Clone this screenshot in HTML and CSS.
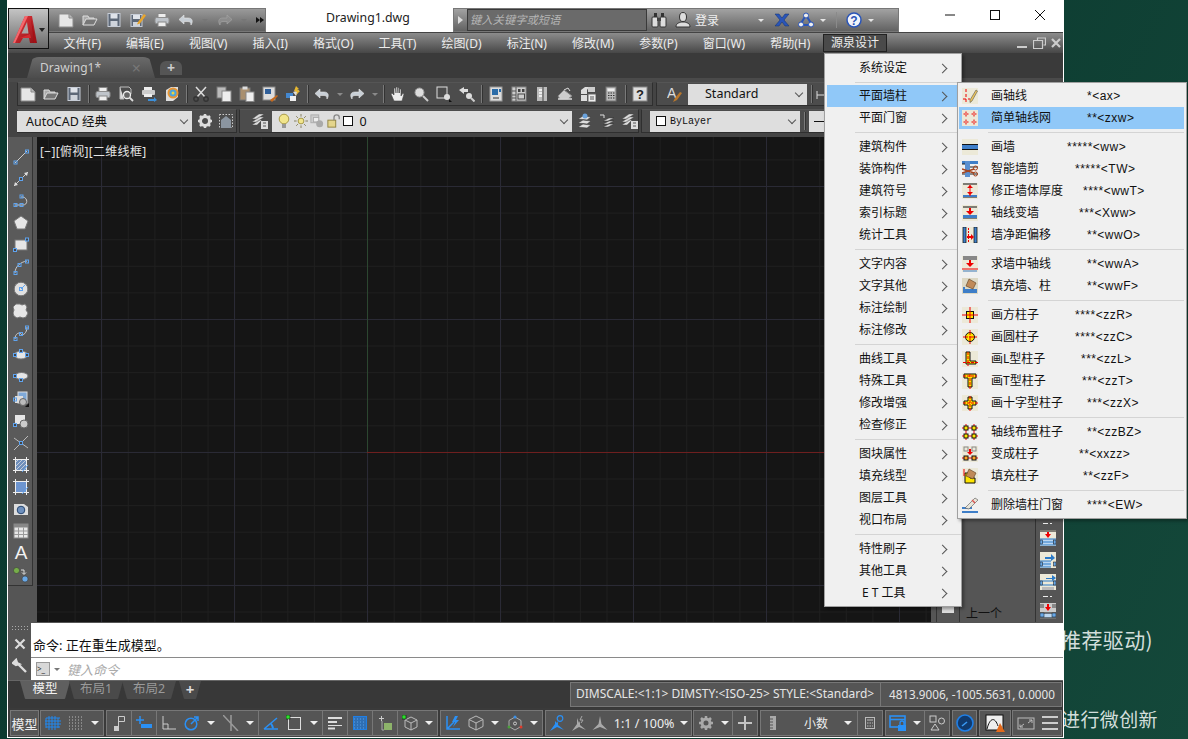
FILE: index.html
```html
<!DOCTYPE html>
<html>
<head>
    <title>Drawing1.dwg</title>
    <link rel="stylesheet" href="styles.css">
</head>
<body>
<svg class="defs" width="0" height="0">
    <defs>
        <linearGradient id="red" x1="0" y1="0" x2="1" y2="1"><stop offset="0" stop-color="#ee3a40"/><stop offset="1" stop-color="#8c1116"/></linearGradient>
        <symbol id="new" viewBox="0 0 16 16"><path d="M1 2h10l4 4v9H1z" fill="#e6e6e6" stroke="#8b8b8b"/><path d="M11 2v4h4" fill="#bbb" stroke="#8b8b8b"/></symbol>
        <symbol id="open" viewBox="0 0 16 16"><path d="M1 13V4h5l1 2h5v2" fill="#aaa" stroke="#ddd"/><path d="M1 13l3-6h11l-3 6z" fill="#777" stroke="#ddd"/></symbol>
        <symbol id="save" viewBox="0 0 16 16"><rect x="2" y="1.500" width="12" height="13" fill="#5d6878" stroke="#c6ccd6"/><rect x="4.500" y="2" width="7" height="4.500" fill="#dfe3ea"/><rect x="4.500" y="9" width="7" height="5" fill="#cfd4dc"/></symbol>
        <symbol id="saveas" viewBox="0 0 16 16"><rect x="1" y="2.500" width="11" height="12" fill="#5d6878" stroke="#c6ccd6"/><rect x="3" y="3" width="7" height="4" fill="#dfe3ea"/><rect x="3" y="10" width="7" height="4" fill="#cfd4dc"/><path d="M8 10l6-8 2 1.500-6 8-3 1z" fill="#eaa62c"/></symbol>
        <symbol id="print" viewBox="0 0 16 16"><rect x="4" y="1.500" width="8" height="4" fill="#eee" stroke="#888"/><rect x="1" y="5.500" width="14" height="6" rx="1.500" fill="#bfc4ca" stroke="#8e8e8e"/><rect x="4" y="10" width="8" height="4.500" fill="#eee" stroke="#888"/></symbol>
        <symbol id="undo" viewBox="0 0 16 16"><path d="M6 3L1 7.500 6 12V9.500h4c2 0 3 1 3 3.500 2-3 2-7-3-7H6z" fill="#c8cfd6" stroke="#e8e8e8" stroke-width=".6"/></symbol>
        <symbol id="redo" viewBox="0 0 16 16"><path d="M10 3l5 4.500L10 12V9.500H6c-2 0-3 1-3 3.500-2-3-2-7 3-7h4z" fill="#c8cfd6" stroke="#e8e8e8" stroke-width=".6"/></symbol>
        <symbol id="undod" viewBox="0 0 16 16"><path d="M10 3l5 4.500L10 12V9.500H6c-2 0-3 1-3 3.500-2-3-2-7 3-7h4z" fill="#8c8c8c" stroke="#a8a8a8" stroke-width=".6"/></symbol>
        <symbol id="preview" viewBox="0 0 16 16"><path d="M2 1h9l2 2v5" fill="none" stroke="#bbb"/><path d="M2 1v12h4" fill="#ddd" stroke="#bbb"/><circle cx="9" cy="9" r="3.500" fill="#666" stroke="#eee" stroke-width="1.300"/><path d="M11.500 11.500l3.500 3.500" stroke="#ddd" stroke-width="1.800"/></symbol>
        <symbol id="plot" viewBox="0 0 16 16"><rect x="3" y="1" width="8" height="3" fill="#eee"/><rect x="1" y="4" width="13" height="5" rx="1" fill="#ccc"/><rect x="3" y="8" width="8" height="3" fill="#eee"/><path d="M7 13h6v-2l3 3-3 2v-1H7z" fill="#3d8fd8"/></symbol>
        <symbol id="publish" viewBox="0 0 16 16"><path d="M2 4l5-3h7v10l-5 4H2z" fill="#ddd"/><circle cx="9" cy="7" r="5.500" fill="#e89532"/><circle cx="9" cy="7" r="3.500" fill="#4ba3dd"/><circle cx="9" cy="7" r="1.500" fill="#e8d542"/></symbol>
        <symbol id="cut" viewBox="0 0 16 16"><path d="M3 1l9 10M13 1L4 11" stroke="#ddd" stroke-width="1.500"/><circle cx="3" cy="13" r="2.200" fill="none" stroke="#333" stroke-width="1.400"/><circle cx="13" cy="13" r="2.200" fill="none" stroke="#333" stroke-width="1.400"/></symbol>
        <symbol id="copy" viewBox="0 0 16 16"><rect x="1" y="1" width="9" height="11" fill="#bbb" stroke="#777"/><rect x="6" y="5" width="9" height="10.500" fill="#eee" stroke="#888"/></symbol>
        <symbol id="paste" viewBox="0 0 16 16"><rect x="1" y="2" width="10" height="12" fill="#a98f6e" stroke="#777"/><rect x="3.500" y="0.500" width="5" height="3" fill="#ddd"/><rect x="7" y="6" width="8" height="9.500" fill="#eee" stroke="#888"/></symbol>
        <symbol id="match" viewBox="0 0 16 16"><rect x="1" y="1" width="12" height="13" fill="#ddd" stroke="#888"/><rect x="3" y="3" width="6" height="5" fill="#2f5f9a"/><path d="M8 14l7-5 1 1-6 6z" fill="#c66a1e"/></symbol>
        <symbol id="brush" viewBox="0 0 16 16"><rect x="1" y="7" width="7" height="5" fill="#4488d0"/><rect x="5" y="10" width="6" height="5" fill="#eee"/><path d="M8 6l6-2-3 6" fill="#ddd"/><path d="M11 0l3 3-2 1 3 1-4 4 1-3-3-1z" fill="#e8b830"/></symbol>
        <symbol id="hand" viewBox="0 0 16 16"><path d="M4 15L1 8l1-1 2 2V2h1.500l.5 5V1h1.500l.5 6V1.500H9l.5 5.500V3h1.500v7l2-3 1 1-2 7z" fill="#eee" stroke="#444" stroke-width=".6"/></symbol>
        <symbol id="zoom" viewBox="0 0 16 16"><circle cx="6.500" cy="6.500" r="4.500" fill="#ddd" stroke="#999"/><path d="M10 10l5 5" stroke="#ccc" stroke-width="2"/></symbol>
        <symbol id="zoomw" viewBox="0 0 16 16"><rect x="1" y="1" width="10" height="11" fill="none" stroke="#ddd"/><circle cx="11" cy="11" r="3" fill="#ddd"/><path d="M13 13l3 3h-3z" fill="#111"/></symbol>
        <symbol id="zoomp" viewBox="0 0 16 16"><path d="M0 4l5-3v2h4v3H5v2z" fill="#ddd"/><circle cx="10" cy="10" r="3" fill="#ddd"/><path d="M12 12l3.500 3.500" stroke="#ccc" stroke-width="2"/></symbol>
        <symbol id="props" viewBox="0 0 16 16"><rect x="2" y="1" width="12" height="14" fill="#ddd" stroke="#999"/><rect x="4" y="3" width="6" height="6" fill="#2b6ca8"/><rect x="11" y="3" width="2" height="3" fill="#2b6ca8"/><path d="M5 12h6" stroke="#333"/></symbol>
        <symbol id="dcenter" viewBox="0 0 16 16"><rect x="1" y="1" width="14" height="14" fill="#ccc" stroke="#888"/><path d="M5 1v14M1 5h4M1 9h4M1 12h4" stroke="#555"/><rect x="7" y="3" width="2.500" height="3" fill="#444"/><rect x="11" y="3" width="2.500" height="3" fill="#444"/><rect x="7" y="8" width="6.500" height="5" fill="none" stroke="#444"/></symbol>
        <symbol id="palette" viewBox="0 0 16 16"><rect x="3" y="1" width="10" height="14" fill="#bbb"/><path d="M9 1v14" stroke="#444"/><path d="M5 4h3M5 7h3M5 10h3" stroke="#eee" stroke-width="2"/></symbol>
        <symbol id="sheet" viewBox="0 0 16 16"><path d="M1 10l6-6 8 6-4 3H3z" fill="#ccc" stroke="#888"/><path d="M1 13h14" stroke="#ddd" stroke-width="1.500"/><path d="M7 4l4-2 2 3" stroke="#ddd" fill="none"/></symbol>
        <symbol id="markup" viewBox="0 0 16 16"><path d="M1 4l4-3h4l-2 3v4H1z" fill="#ddd"/><rect x="8" y="1" width="7" height="5" fill="#ccc"/><rect x="1" y="9" width="6" height="6" fill="#ddd"/><rect x="8" y="8" width="8" height="8" fill="#eee" stroke="#666"/><path d="M10 11h4M10 13h4" stroke="#555"/></symbol>
        <symbol id="calc" viewBox="0 0 16 16"><rect x="3" y="1" width="10" height="14" fill="#bbb" stroke="#777"/><rect x="4.500" y="2.500" width="7" height="2.500" fill="#eee"/><path d="M5 7h1.500M7.500 7H9M10 7h1.500M5 9.500h1.500M7.500 9.500H9M10 9.500h1.500M5 12h1.500M7.500 12H9M10 12h1.500" stroke="#333" stroke-width="1.200"/></symbol>
        <symbol id="hlp" viewBox="0 0 16 16"><rect x="1" y="1" width="14" height="14" fill="#ddd" stroke="#888"/><text x="8" y="13" text-anchor="middle" font-size="13" font-weight="700" font-family="Liberation Sans" fill="#222">?</text></symbol>
        <symbol id="txbrush" viewBox="0 0 16 16"><text x="0" y="12" font-size="14" font-family="Liberation Sans" fill="#ddd">A</text><path d="M6 16l2-4 5-6 2 1-5 7z" fill="#b9772c"/></symbol>
        <symbol id="dimic" viewBox="0 0 16 16"><path d="M1 5v8M1 9h14" stroke="#ddd"/><path d="M8 6l5-5 1 1-5 6z" fill="#b9772c"/></symbol>
        <symbol id="gear" viewBox="0 0 16 16"><circle cx="8" cy="8" r="4.500" fill="none" stroke="#ddd" stroke-width="3"/><path d="M8 1v3M8 12v3M1 8h3M12 8h3M3 3l2 2M11 11l2 2M13 3l-2 2M3 13l2-2" stroke="#ddd" stroke-width="2.500"/></symbol>
        <symbol id="wsgrid" viewBox="0 0 16 16"><rect x="1.500" y="1.500" width="13" height="13" fill="none" stroke="#ccc" stroke-dasharray="1.500 1.500"/><path d="M3 15V7l5-4 5 4v8z" fill="#8b95a0"/></symbol>
        <symbol id="layers" viewBox="0 0 16 16"><path d="M0 6l7-5h5L5 6zM0 9l7-5h5L5 9zM0 12l7-5h3L5 12z" fill="#ddd" stroke="#444" stroke-width=".4"/><rect x="9" y="8" width="7" height="8" fill="#ddd"/><path d="M11 10h3M11 13h3" stroke="#555"/></symbol>
        <symbol id="layers2" viewBox="0 0 16 16"><path d="M2 6l5-3 8 1-4 3zM2 10l5-3 8 1-4 3zM2 14l5-3 8 1-4 3z" fill="#ddd" stroke="#333" stroke-width=".5"/><circle cx="9" cy="3" r="2.500" fill="#6aa2dc"/></symbol>
        <symbol id="layers3" viewBox="0 0 16 16"><path d="M1 2h4v3" stroke="#ddd" fill="none"/><path d="M4 8l6-3h5l-6 3zM4 11l6-3h5l-6 3zM4 14l6-3h5l-6 3z" fill="#ddd" stroke="#333" stroke-width=".5"/></symbol>
        <symbol id="bulb" viewBox="0 0 14 16"><circle cx="7" cy="6" r="4.800" fill="#f1e58c" stroke="#a99b4a"/><rect x="5" y="11" width="4" height="4" fill="#999"/></symbol>
        <symbol id="sun" viewBox="0 0 16 16"><circle cx="8" cy="8" r="3.300" fill="#f1e58c" stroke="#9d8f3e"/><path d="M8 0v3M8 13v3M0 8h3M13 8h3M2.500 2.500l2 2M11.500 11.500l2 2M13.500 2.500l-2 2M2.500 13.500l2-2" stroke="#7d7650"/></symbol>
        <symbol id="frz" viewBox="0 0 16 16"><rect x="1" y="1" width="9" height="9" fill="#ccc" stroke="#aaa"/><rect x="4" y="4" width="6" height="5" fill="#eee" stroke="#aaa"/><circle cx="11" cy="11" r="4" fill="#aaa"/></symbol>
        <symbol id="lock" viewBox="0 0 16 16"><rect x="1" y="7" width="9" height="8" fill="#e4d58c" stroke="#8a7c3a"/><path d="M8 7V4a3 3 0 0 1 6 0v2" fill="none" stroke="#888" stroke-width="1.500"/></symbol>
        <symbol id="logo" viewBox="0 0 24 27"><path d="M12 0h7l5 27h-7l-1-5h-6l-3 5H0z" fill="url(#red)"/><path d="M14 6L8.500 17.500H15.500z" fill="#a7a7a7"/><path d="M12 0h3L2 27H0z" fill="#f4686d"/><path d="M18 2l5 25h-2z" fill="#a80f15"/><path d="M7 22l10-4 1 4z" fill="#d42a30"/></symbol>
        <symbol id="binoc" viewBox="0 0 16 16"><rect x="1" y="5" width="6" height="10" rx="1" fill="#ddd" stroke="#333"/><rect x="9" y="5" width="6" height="10" rx="1" fill="#ddd" stroke="#333"/><rect x="3" y="1" width="3" height="4" fill="#333"/><rect x="10" y="1" width="3" height="4" fill="#333"/><rect x="6" y="6" width="4" height="3" fill="#444"/></symbol>
        <symbol id="user" viewBox="0 0 16 16"><ellipse cx="8" cy="5" rx="3.500" ry="4.500" fill="#ddd" stroke="#333"/><path d="M1 15c0-4 3-4 5-5h4c2 1 5 1 5 5z" fill="#ddd" stroke="#333"/></symbol>
        <symbol id="xch" viewBox="0 0 16 16"><path d="M1 2h4l3 4 3-4h4L10 8l5 6h-4L8 10l-3 4H1l5-6z" fill="#2a55b8" stroke="#13306f" stroke-width=".5"/></symbol>
        <symbol id="tri" viewBox="0 0 16 16"><path d="M8 3L2 13h12z" fill="none" stroke="#2a55b8" stroke-width="2"/><circle cx="8" cy="3.500" r="2.500" fill="#eee" stroke="#2a55b8"/><circle cx="3" cy="12.500" r="2.500" fill="#eee" stroke="#2a55b8"/><circle cx="13" cy="12.500" r="2.500" fill="#eee" stroke="#2a55b8"/></symbol>
        <symbol id="qhelp" viewBox="0 0 16 16"><circle cx="8" cy="8" r="7" fill="#f2f4fa" stroke="#2a55b8" stroke-width="1.500"/><text x="8" y="12.500" text-anchor="middle" font-size="12" font-weight="700" font-family="Liberation Sans" fill="#2a55b8">?</text></symbol>

        <symbol id="t-line" viewBox="0 0 16 16"><path d="M2 14L14 2" stroke="#ccc"/><rect x="1" y="12" width="3" height="3" fill="none" stroke="#5fa3ee"/><rect x="12.500" y="1" width="3" height="3" fill="none" stroke="#5fa3ee"/></symbol>
        <symbol id="t-cline" viewBox="0 0 16 16"><path d="M1 15L15 1" stroke="#ccc"/><path d="M1 15l4-1-3-3zM15 1l-4 1 3 3z" fill="#ddd"/><rect x="6.500" y="6.500" width="3" height="3" fill="#444" stroke="#5fa3ee"/></symbol>
        <symbol id="t-pline" viewBox="0 0 16 16"><path d="M2 12h8c5 0 5-7 0-8H8" fill="none" stroke="#ccc"/><rect x="1" y="10.500" width="3" height="3" fill="none" stroke="#5fa3ee"/><rect x="7" y="10.500" width="3" height="3" fill="none" stroke="#5fa3ee"/><rect x="7" y="2" width="3" height="3" fill="none" stroke="#5fa3ee"/></symbol>
        <symbol id="t-poly" viewBox="0 0 16 16"><path d="M8 1l7 5-3 8H4L1 6z" fill="#e6e6e6" stroke="#777"/></symbol>
        <symbol id="t-rect" viewBox="0 0 16 16"><rect x="2" y="3" width="12" height="10" fill="#e6e6e6" stroke="#777"/><rect x="0.500" y="11.500" width="3" height="3" fill="#444" stroke="#5fa3ee"/><rect x="12.500" y="1" width="3" height="3" fill="#444" stroke="#5fa3ee"/></symbol>
        <symbol id="t-arc" viewBox="0 0 16 16"><path d="M2 14C2 8 7 3 14 2" fill="none" stroke="#ccc"/><rect x="1" y="12.500" width="3" height="3" fill="none" stroke="#5fa3ee"/><rect x="5" y="4.500" width="3" height="3" fill="none" stroke="#5fa3ee"/><rect x="12.500" y="1" width="3" height="3" fill="none" stroke="#5fa3ee"/></symbol>
        <symbol id="t-circle" viewBox="0 0 16 16"><circle cx="8" cy="8" r="6.800" fill="#e0e0e0" stroke="#777"/><path d="M8 8l4-4" stroke="#5fa3ee"/><rect x="6.500" y="6.500" width="3" height="3" fill="none" stroke="#5fa3ee"/></symbol>
        <symbol id="t-cloud" viewBox="0 0 16 16"><path d="M3 1h4l2 1 3-1 2 3-1 3 2 3-2 4-3 1-3-1-3 1-3-2-1-3 1-3-1-3z" fill="#e6e6e6" stroke="#777"/></symbol>
        <symbol id="t-spline" viewBox="0 0 16 16"><path d="M2 14c0-6 5-7 6-5s6 0 6-7" fill="none" stroke="#ccc"/><rect x="1" y="12.500" width="3" height="3" fill="none" stroke="#5fa3ee"/><rect x="6.500" y="7.500" width="3" height="3" fill="none" stroke="#5fa3ee"/><rect x="12.500" y="1" width="3" height="3" fill="none" stroke="#5fa3ee"/></symbol>
        <symbol id="t-ell" viewBox="0 0 16 16"><ellipse cx="8" cy="8" rx="6.500" ry="4" fill="#e6e6e6" stroke="#777"/><rect x="0.500" y="6.500" width="3" height="3" fill="#444" stroke="#5fa3ee"/><rect x="12.500" y="6.500" width="3" height="3" fill="#444" stroke="#5fa3ee"/><rect x="6.500" y="2.500" width="3" height="3" fill="#444" stroke="#5fa3ee"/></symbol>
        <symbol id="t-earc" viewBox="0 0 16 16"><ellipse cx="8.500" cy="7" rx="6.500" ry="3.500" fill="#e6e6e6" stroke="#777"/><rect x="0.500" y="5.500" width="3" height="3" fill="#444" stroke="#5fa3ee"/><rect x="6.500" y="9.500" width="3" height="3" fill="#444" stroke="#5fa3ee"/></symbol>
        <symbol id="t-ins" viewBox="0 0 16 16"><rect x="5" y="1" width="9" height="11" fill="#7fa9d8" stroke="#ddd"/><rect x="2" y="5" width="8" height="7" fill="#ddd"/><circle cx="10" cy="11" r="3.500" fill="#bbb" stroke="#666"/><rect x="0.500" y="7" width="3" height="3" fill="none" stroke="#5fa3ee"/><path d="M12 16l4-4v4z" fill="#111"/></symbol>
        <symbol id="t-blk" viewBox="0 0 16 16"><rect x="2" y="2" width="10" height="9" fill="#e6e6e6"/><circle cx="11" cy="11" r="4" fill="#ccc" stroke="#666"/><rect x="0.500" y="10.500" width="3" height="3" fill="#444" stroke="#5fa3ee"/></symbol>
        <symbol id="t-pt" viewBox="0 0 16 16"><path d="M1 15L15 1M1 3l14 10" stroke="#bbb"/><rect x="6.500" y="6.500" width="3" height="3" fill="#444" stroke="#5fa3ee"/></symbol>
        <symbol id="t-hatch" viewBox="0 0 16 16"><rect x="2.500" y="2.500" width="11" height="11" fill="#6f8fbc"/><path d="M2 6L6 2M2 10l8-8M2 14L14 2M6 14l8-8M10 14l4-4" stroke="#e8e8e8" stroke-width=".7"/><path d="M0 2.500h16M0 13.500h16M2.500 0v16M13.500 0v16" stroke="#eee"/><path d="M9 15l6-7" stroke="#5fa3ee"/></symbol>
        <symbol id="t-grad" viewBox="0 0 16 16"><rect x="2.500" y="2.500" width="11" height="11" fill="#6d95d0"/><path d="M0 2.500h16M0 13.500h16M2.500 0v16M13.500 0v16" stroke="#eee"/><path d="M9 15l6-7" stroke="#5fa3ee"/></symbol>
        <symbol id="t-reg" viewBox="0 0 16 16"><path d="M1 3h10l4 3v8H1z" fill="#ddd"/><circle cx="8" cy="9" r="3.800" fill="#6e90bd" stroke="#26456e"/></symbol>
        <symbol id="t-table" viewBox="0 0 16 16"><rect x="1" y="1" width="14" height="14" fill="#e8e8e8" stroke="#888"/><rect x="1" y="1" width="14" height="3.500" fill="#888"/><path d="M1 8h14M1 11.500h14M5.500 4.500V15M10.500 4.500V15" stroke="#999"/></symbol>
        <symbol id="t-add" viewBox="0 0 16 16"><circle cx="3.500" cy="3.500" r="3" fill="#76ad4a" stroke="#333" stroke-width=".5"/><circle cx="12" cy="12" r="3" fill="#69a8e6" stroke="#333" stroke-width=".5"/><path d="M8 3h3v4M9 5.500l2 2 2-2" fill="none" stroke="#ddd"/></symbol>

        <symbol id="m-ax" viewBox="0 0 16 16"><rect width="16" height="16" fill="#ece9d8"/><path d="M4 1v14M1 11h7" stroke="#e00" stroke-dasharray="3 2"/><path d="M8 12l6-10 1.500 1L10 13l-2 1.500z" fill="#eec65a" stroke="#555" stroke-width=".6"/></symbol>
        <symbol id="m-grid" viewBox="0 0 16 16"><rect width="16" height="16" fill="#ece9d8"/><path d="M4 1.500v5M1.500 4h5M12 1.500v5M9.500 4h5M4 9.500v5M1.500 12h5M12 9.500v5M9.500 12h5" stroke="#e00" stroke-dasharray="2 1"/></symbol>
        <symbol id="m-wall" viewBox="0 0 16 16"><rect width="16" height="16" fill="#ece9d8"/><rect x="0" y="5.500" width="16" height="5" fill="#3e7ec8"/><path d="M0 5.500h16M0 10.500h16" stroke="#111" stroke-width="1"/></symbol>
        <symbol id="m-cut" viewBox="0 0 16 16"><rect x="0" y="0" width="16" height="3" fill="#3e7ec8"/><path d="M0 3h5l2 3h9M0 13h16" stroke="#222" fill="none"/><rect x="3" y="0" width="5" height="16" fill="#5a8fd0"/><path d="M0 8l12 4M0 12l12-4" stroke="#a5441e" stroke-width="1.600"/><circle cx="13.500" cy="7" r="2" fill="none" stroke="#a5441e"/><circle cx="13.500" cy="13" r="2" fill="none" stroke="#a5441e"/></symbol>
        <symbol id="m-thick" viewBox="0 0 16 16"><rect width="16" height="16" fill="#ece9d8"/><path d="M1 1h14M1 14h14" stroke="#111"/><rect x="1" y="12" width="14" height="2" fill="#3e7ec8"/><path d="M8 2v11" stroke="#e00"/><path d="M8 2l3 3H5zM8 12L5 9h6z" fill="#e00"/></symbol>
        <symbol id="m-xww" viewBox="0 0 16 16"><rect width="16" height="16" fill="#ece9d8"/><path d="M1 2h14M1 13h14" stroke="#111"/><rect x="1" y="10" width="14" height="3" fill="#3e7ec8"/><path d="M8 3v5" stroke="#e00" stroke-width="2"/><path d="M8 10L4 6h8z" fill="#e00"/></symbol>
        <symbol id="m-off" viewBox="0 0 16 16"><rect width="16" height="16" fill="#ece9d8"/><rect x="1" y="0" width="3" height="16" fill="#3e7ec8" stroke="#111" stroke-width=".7"/><rect x="12" y="0" width="3" height="16" fill="#3e7ec8" stroke="#111" stroke-width=".7"/><path d="M6.500 1v14" stroke="#e00" stroke-dasharray="2 1"/><path d="M5 10h5" stroke="#e00" stroke-width="2"/><path d="M12 10l-3-3v6z" fill="#e00"/></symbol>
        <symbol id="m-mid" viewBox="0 0 16 16"><rect width="16" height="16" fill="#ece9d8"/><rect x="1" y="0" width="14" height="4" fill="#888"/><path d="M0 13h16" stroke="#e00"/><path d="M1 15h14" stroke="#3e7ec8"/><path d="M8 4v4" stroke="#e00" stroke-width="2"/><path d="M8 11L4 7h8z" fill="#e00"/></symbol>
        <symbol id="m-fillw" viewBox="0 0 16 16"><rect width="16" height="16" fill="#ddd8c4"/><path d="M1 11h14v4H1z" fill="#3e7ec8"/><path d="M7 1l7 4-3 6-7-3z" fill="#c08a58" stroke="#5a3c1e" stroke-width=".6"/><path d="M2 9v5" stroke="#3e7ec8" stroke-width="2"/></symbol>
        <symbol id="m-sq" viewBox="0 0 16 16"><rect width="16" height="16" fill="#ece9d8"/><path d="M8 0v16M0 8h16" stroke="#e00"/><rect x="4.500" y="4.500" width="7" height="7" fill="#ffe600" stroke="#111"/><path d="M8 4v8M4 8h8" stroke="#e00"/></symbol>
        <symbol id="m-circ" viewBox="0 0 16 16"><rect width="16" height="16" fill="#ece9d8"/><circle cx="8" cy="8" r="4.500" fill="#ffe600" stroke="#111"/><path d="M8 1v14M1 8h14" stroke="#e00" stroke-dasharray="5 1"/></symbol>
        <symbol id="m-l" viewBox="0 0 16 16"><rect width="16" height="16" fill="#ece9d8"/><path d="M4 1h4v9h6v3H4z" fill="#ffe600" stroke="#111"/><path d="M6 1v14M1 11.500h15" stroke="#e00" stroke-dasharray="3 1"/></symbol>
        <symbol id="m-t" viewBox="0 0 16 16"><rect width="16" height="16" fill="#ece9d8"/><path d="M2 1h12v4H10v9H6V5H2z" fill="#ffe600" stroke="#111"/><path d="M8 1v15M1 3h14" stroke="#e00" stroke-dasharray="3 1"/></symbol>
        <symbol id="m-x" viewBox="0 0 16 16"><rect width="16" height="16" fill="#ece9d8"/><path d="M6 2h4v4h4v4h-4v4H6v-4H2V6h4z" fill="#ffe600" stroke="#111"/><path d="M8 1v15M1 8h15" stroke="#e00" stroke-dasharray="3 1"/></symbol>
        <symbol id="m-bz" viewBox="0 0 16 16"><path d="M4 0v16M12 0v16M0 4h16M0 12h16" stroke="#e00"/><rect x="2" y="2" width="4" height="4" fill="#ffe600" stroke="#111"/><rect x="10" y="2" width="4" height="4" fill="#ffe600" stroke="#111"/><rect x="2" y="10" width="4" height="4" fill="#ffe600" stroke="#111"/><rect x="10" y="10" width="4" height="4" fill="#ffe600" stroke="#111"/></symbol>
        <symbol id="m-cv" viewBox="0 0 16 16"><rect width="16" height="16" fill="#ece9d8"/><rect x="2" y="1" width="4" height="4" fill="none" stroke="#888"/><rect x="10" y="1" width="4" height="4" fill="none" stroke="#888"/><path d="M8 3v4" stroke="#e00" stroke-width="2"/><path d="M8 9L5 6h6z" fill="#e00"/><path d="M0 12h16" stroke="#e00"/><rect x="2" y="10" width="4" height="4" fill="#ffa726" stroke="#111"/><rect x="10" y="10" width="4" height="4" fill="#ffa726" stroke="#111"/></symbol>
        <symbol id="m-fillc" viewBox="0 0 16 16"><rect width="16" height="16" fill="#ece9d8"/><path d="M3 5h5v5h5v5H3z" fill="#ffe600" stroke="#111"/><path d="M7 1l7 4-3 6-7-3z" fill="#c08a58" stroke="#5a3c1e" stroke-width=".6"/><path d="M2 1v7" stroke="#e00"/></symbol>
        <symbol id="m-del" viewBox="0 0 16 16"><path d="M0 15h16" stroke="#3e7ec8" stroke-width="2"/><path d="M0 11h10" stroke="#3e7ec8" stroke-width="2"/><path d="M3 11L13 1l3 2-9 9z" fill="#e8e4d8" stroke="#555" stroke-width=".6"/><path d="M10 3l3 3" stroke="#d9534f" stroke-width="1.400"/></symbol>
        <symbol id="r-a" viewBox="0 0 16 16"><rect width="16" height="16" fill="#ece9d8"/><path d="M0 1h16" stroke="#111"/><rect x="0" y="9" width="16" height="6" fill="#bcd7f0"/><path d="M0 9h16M0 12h16M0 15h16" stroke="#2a7ac8"/><rect x="0" y="10" width="2.500" height="4" fill="#69a8e6" stroke="#111" stroke-width=".5"/><rect x="13.500" y="10" width="2.500" height="4" fill="#69a8e6" stroke="#111" stroke-width=".5"/><path d="M8 2v3" stroke="#e00" stroke-width="2"/><path d="M8 8L5 4h6z" fill="#e00"/></symbol>
        <symbol id="r-b" viewBox="0 0 16 16"><rect width="16" height="16" fill="#ece9d8"/><rect x="0" y="9" width="11" height="6" fill="#bcd7f0"/><path d="M0 9h11M0 12h11M0 15h11" stroke="#2a7ac8"/><path d="M5 5h6v-3l4 4-4 3V7H5z" fill="#2a7ac8"/><rect x="0" y="10" width="2.500" height="4" fill="#69a8e6" stroke="#111" stroke-width=".5"/><rect x="13.500" y="10" width="2.500" height="4" fill="#69a8e6" stroke="#111" stroke-width=".5"/></symbol>
        <symbol id="r-c" viewBox="0 0 16 16"><rect width="16" height="16" fill="#ece9d8"/><path d="M0 7h16M0 11h16" stroke="#2a7ac8"/><path d="M6 4h6V1l4 3-4 3V5H6z" fill="#2a7ac8"/><rect x="0" y="7" width="2.500" height="4" fill="#69a8e6" stroke="#111" stroke-width=".5"/><rect x="13.500" y="7" width="2.500" height="4" fill="#69a8e6" stroke="#111" stroke-width=".5"/><rect x="2" y="13" width="12" height="3" fill="#bbb"/></symbol>
        <symbol id="r-d" viewBox="0 0 16 16"><rect width="16" height="16" fill="#ccc"/><rect x="0" y="1" width="4" height="4" fill="#888"/><rect x="12" y="1" width="4" height="4" fill="#888"/><path d="M8 1v3" stroke="#e00" stroke-width="2"/><path d="M8 8L5 4h6z" fill="#e00"/><rect x="0" y="10" width="16" height="5" fill="#bcd7f0"/><path d="M0 10h16M0 15h16" stroke="#111"/><rect x="0" y="10" width="4" height="4" fill="#69a8e6" stroke="#111" stroke-width=".5"/><rect x="12" y="10" width="4" height="4" fill="#69a8e6" stroke="#111" stroke-width=".5"/></symbol>

        <symbol id="s-grid" viewBox="0 0 16 16"><path d="M1 3v10M4 1v14M7 1v14M10 1v14M13 3v10M1 3h14M0 6h16M0 9h16M1 12h14" stroke="#2088f0"/></symbol>
        <symbol id="s-dots" viewBox="0 0 16 16"><path d="M1 2h14M1 5h14M1 8h14M1 11h14M1 14h14" stroke="#bbb" stroke-dasharray="1 2"/></symbol>
        <symbol id="s-note" viewBox="0 0 16 16"><rect x="3" y="11" width="5" height="5" fill="#ccc"/><path d="M7.500 11V1.500h6v5h-6" fill="none" stroke="#ccc"/></symbol>
        <symbol id="s-inf" viewBox="0 0 16 16"><path d="M4 1v8M0 5h8" stroke="#2a90f5" stroke-width="1.500"/><rect x="5" y="9" width="11" height="4" fill="#2a90f5"/></symbol>
        <symbol id="s-ortho" viewBox="0 0 16 16"><path d="M2 1v13h13M2 9h5v5" fill="none" stroke="#ccc"/></symbol>
        <symbol id="s-polar" viewBox="0 0 16 16"><circle cx="7" cy="9" r="5.800" fill="none" stroke="#2a90f5" stroke-width="1.500"/><path d="M7 9l7-7M10 2h4v4" fill="none" stroke="#2a90f5" stroke-width="1.500"/></symbol>
        <symbol id="s-iso" viewBox="0 0 16 16"><path d="M0 0l15 16M8 0v16" stroke="#9a9a9a" stroke-width="1.500"/></symbol>
        <symbol id="s-ang" viewBox="0 0 16 16"><path d="M1 14h14M1 14L14 3" stroke="#2a90f5" stroke-width="1.500"/><path d="M8 8.500c1 1.500 2 3 2 5" fill="none" stroke="#2a90f5" stroke-width="2"/></symbol>
        <symbol id="s-osnap" viewBox="0 0 16 16"><rect x="2.500" y="2.500" width="12" height="12" fill="none" stroke="#ddd"/><rect x="0" y="0" width="4" height="4" fill="#2ce02c" stroke="#111" stroke-width=".6"/></symbol>
        <symbol id="s-lw" viewBox="0 0 16 16"><path d="M1 3h14" stroke="#ddd" stroke-width="2"/><path d="M1 7h9" stroke="#ddd" stroke-width="2"/><path d="M1 10.500h14" stroke="#ddd"/><path d="M1 13.500h7" stroke="#ddd" stroke-width="2"/></symbol>
        <symbol id="s-tr" viewBox="0 0 16 16"><rect x="1" y="1" width="14" height="14" fill="#1f7fe6"/><rect x="2" y="2" width="12" height="12" fill="#2f6fb5"/><path d="M2 4h12M2 7h12M2 10h12M2 13h12" stroke="#5aa3e8" stroke-dasharray="1 2"/></symbol>
        <symbol id="s-sel" viewBox="0 0 16 16"><path d="M2 3.500h5M4.500 1v5" stroke="#ccc"/><rect x="7" y="8" width="8" height="7" fill="#8db36a"/><path d="M5 6v9h2" fill="none" stroke="#aaa"/></symbol>
        <symbol id="s-3d" viewBox="0 0 16 16"><path d="M8 1l7 3.500v7L8 15l-7-3.500v-7zM1 4.500L8 8l7-3.500M8 8v7" fill="none" stroke="#bbb"/></symbol>
        <symbol id="s-3do" viewBox="0 0 16 16"><path d="M9 2l6 3v7l-6 3-6-3V5zM3 5l6 3 6-3M9 8v7" fill="none" stroke="#bbb"/><rect x="0" y="0" width="4" height="4" fill="#2ce02c" stroke="#111" stroke-width=".6"/></symbol>
        <symbol id="s-ucs" viewBox="0 0 16 16"><path d="M2 1v13h13M2 14L9 7" fill="none" stroke="#2a90f5" stroke-width="1.500"/><path d="M10 1L7 7h3l-2 5 6-7h-3l2-4z" fill="#2a90f5"/></symbol>
        <symbol id="s-gizmo" viewBox="0 0 16 16"><path d="M8 2l6 3.500v6L8 15l-6-3.500v-6z" fill="none" stroke="#aaa"/><circle cx="8" cy="2" r="1.500" fill="#3a90e8"/><circle cx="2" cy="12" r="1.500" fill="#4aa03a"/><circle cx="14" cy="12" r="1.500" fill="#dd3a2a"/><circle cx="8" cy="8.500" r="1.500" fill="none" stroke="#ccc"/></symbol>
        <symbol id="s-man" viewBox="0 0 16 16"><path d="M6 6l2 2 1-2 0 4 6 5-7-3-7 4 5-7z" fill="#2a90f5"/><circle cx="11" cy="3.500" r="2.800" fill="none" stroke="#2a90f5" stroke-width="1.200"/></symbol>
        <symbol id="s-man2" viewBox="0 0 16 16"><path d="M6 3l2 5 1-2 0 4 6 5-7-3-7 4 5-7z" fill="#a9a9a9"/><path d="M11 1l-2 4h3l-2 3" fill="none" stroke="#a9a9a9"/></symbol>
        <symbol id="s-man3" viewBox="0 0 16 16"><path d="M8 1l1.500 8 6 6-7.500-3-7.500 3 6-6z" fill="#a9a9a9"/></symbol>
        <symbol id="s-gear" viewBox="0 0 16 16"><circle cx="8" cy="8" r="4" fill="none" stroke="#a9a9a9" stroke-width="3"/><path d="M8 1v3M8 12v3M1 8h3M12 8h3M3 3l2 2M11 11l2 2M13 3l-2 2M3 13l2-2" stroke="#a9a9a9" stroke-width="2.500"/></symbol>
        <symbol id="s-plus" viewBox="0 0 16 16"><path d="M8 1v14M1 8h14" stroke="#c4c4c4" stroke-width="2"/></symbol>
        <symbol id="s-ruler" viewBox="0 0 16 16"><rect x="4" y="1" width="6" height="14" fill="#a9a9a9"/><path d="M4 4h3M4 7h3M4 10h3M4 13h3" stroke="#555"/></symbol>
        <symbol id="s-calc" viewBox="0 0 16 16"><rect x="3.500" y="2.500" width="9" height="11" fill="none" stroke="#bbb"/><path d="M5 5h6" stroke="#bbb"/><path d="M5 8h1.500M7.500 8H9M10 8h1M5 11h1.500M7.500 11H9M10 11h1" stroke="#bbb"/></symbol>
        <symbol id="s-wl" viewBox="0 0 18 18"><rect x="1" y="2" width="15" height="11" fill="none" stroke="#2a90f5" stroke-width="1.600"/><path d="M1 5.500h15" stroke="#2a90f5" stroke-width="1.600"/><rect x="9" y="11" width="8" height="6" fill="#2a90f5"/><path d="M11 11V9a2 2 0 0 1 4 0v2" fill="none" stroke="#2a90f5" stroke-width="1.300"/></symbol>
        <symbol id="s-shape" viewBox="0 0 16 16"><rect x="1" y="1" width="6" height="6" fill="none" stroke="#ccc"/><circle cx="12.500" cy="6" r="3" fill="none" stroke="#ccc"/><path d="M6 9l4 6H2z" fill="none" stroke="#ccc"/></symbol>
        <symbol id="s-perf" viewBox="0 0 18 18"><circle cx="9" cy="9" r="8" fill="#103a6e" stroke="#1f7fe6" stroke-width="1.600"/><path d="M6 12l5-4" stroke="#3a9af5" stroke-width="1.600"/></symbol>
        <symbol id="s-warn" viewBox="0 0 20 18"><rect x="1" y="1" width="17" height="15" fill="#eee" stroke="#111"/><path d="M2 15C5 3 10 3 13 12" fill="none" stroke="#111"/><path d="M15 9l5 9h-9z" fill="#e06a1c"/></symbol>
        <symbol id="s-full" viewBox="0 0 18 16"><rect x="1" y="3" width="16" height="11" fill="none" stroke="#bbb"/><path d="M3 12l4-3M3 12V9.500M3 12h3M15 5l-4 3M15 5h-3M15 5v3" fill="none" stroke="#bbb"/></symbol>
        <symbol id="s-menu" viewBox="0 0 16 16"><path d="M0 2h16M0 8h16M0 14h16" stroke="#ccc" stroke-width="2"/></symbol>
    </defs>
</svg>

<div class="window">
    <div class="titlebar">
        <div class="qat">
            <svg class="i"><use href="#new"/></svg>
            <svg class="i"><use href="#open"/></svg>
            <svg class="i"><use href="#save"/></svg>
            <svg class="i"><use href="#saveas"/></svg>
            <svg class="i"><use href="#print"/></svg>
            <svg class="i"><use href="#undo"/></svg>
            <span class="drop gray"></span>
            <svg class="i"><use href="#undod"/></svg>
            <span class="drop gray"></span>
            <span class="more"><i></i><i></i></span>
        </div>
        <div class="docname">Drawing1.dwg</div>
        <div class="infobar">
            <span class="tri-right"></span>
            <div class="search">键入关键字或短语</div>
            <svg class="i"><use href="#binoc"/></svg>
            <svg class="i user"><use href="#user"/></svg>
            <span class="login">登录</span>
            <span class="drop light"></span>
            <svg class="i xch"><use href="#xch"/></svg>
            <svg class="i"><use href="#tri"/></svg>
            <span class="drop light"></span>
            <span class="info-sep"></span>
            <svg class="i"><use href="#qhelp"/></svg>
            <span class="drop light"></span>
        </div>
        <div class="winctrl">
            <span class="wbtn"><svg width="12" height="12"><path d="M1 6h10" stroke="#111"/></svg></span>
            <span class="wbtn"><svg width="12" height="12"><rect x="1.500" y="1.500" width="9" height="9" fill="none" stroke="#111"/></svg></span>
            <span class="wbtn"><svg width="12" height="12"><path d="M1 1l10 10M11 1L1 11" stroke="#111"/></svg></span>
        </div>
    </div>

    <div class="logo">
        <svg width="24" height="27"><use href="#logo"/></svg>
        <span class="drop dark"></span>
    </div>

    <div class="menubar">
        <span class="mb">文件(F)</span>
        <span class="mb">编辑(E)</span>
        <span class="mb">视图(V)</span>
        <span class="mb">插入(I)</span>
        <span class="mb">格式(O)</span>
        <span class="mb">工具(T)</span>
        <span class="mb">绘图(D)</span>
        <span class="mb">标注(N)</span>
        <span class="mb">修改(M)</span>
        <span class="mb">参数(P)</span>
        <span class="mb">窗口(W)</span>
        <span class="mb">帮助(H)</span>
        <span class="mb active">源泉设计</span>
        <div class="mdi">
            <svg width="12" height="12"><path d="M1 10h10" stroke="#ccc" stroke-width="2"/></svg>
            <svg width="13" height="12"><path d="M4.500 3V1h8v7h-2M.5 3.500h9v8h-9z" fill="none" stroke="#ccc" stroke-width="1.200"/></svg>
            <svg width="10" height="10"><path d="M1 1l8 8M9 1L1 9" stroke="#ccc" stroke-width="2.200"/></svg>
        </div>
    </div>

    <div class="tabbar">
        <div class="doctab">Drawing1*<span class="tabx">×</span></div>
        <div class="addtab">+</div>
    </div>

    <div class="tbrow row1">
        <div class="panel p-std">
            <svg class="i"><use href="#new"/></svg>
            <svg class="i"><use href="#open"/></svg>
            <svg class="i"><use href="#save"/></svg>
            <span class="sep"></span>
            <svg class="i"><use href="#print"/></svg>
            <svg class="i"><use href="#preview"/></svg>
            <svg class="i"><use href="#plot"/></svg>
            <svg class="i"><use href="#publish"/></svg>
            <span class="sep"></span>
            <svg class="i"><use href="#cut"/></svg>
            <svg class="i"><use href="#copy"/></svg>
            <svg class="i"><use href="#paste"/></svg>
            <svg class="i"><use href="#match"/></svg>
            <svg class="i"><use href="#brush"/></svg>
            <span class="sep"></span>
            <svg class="i"><use href="#undo"/></svg>
            <span class="drop gray"></span>
            <svg class="i"><use href="#redo"/></svg>
            <span class="drop gray"></span>
            <span class="sep"></span>
            <svg class="i"><use href="#hand"/></svg>
            <svg class="i"><use href="#zoom"/></svg>
            <svg class="i"><use href="#zoomw"/></svg>
            <svg class="i"><use href="#zoomp"/></svg>
            <span class="sep"></span>
            <svg class="i"><use href="#props"/></svg>
            <svg class="i"><use href="#dcenter"/></svg>
            <svg class="i"><use href="#palette"/></svg>
            <svg class="i"><use href="#sheet"/></svg>
            <svg class="i"><use href="#markup"/></svg>
            <svg class="i"><use href="#calc"/></svg>
            <span class="sep"></span>
            <svg class="i"><use href="#hlp"/></svg>
        </div>
        <div class="panel p-style">
            <svg class="i"><use href="#txbrush"/></svg>
            <div class="combo style-combo"><span>Standard</span></div>
            <span class="sep"></span>
            <svg class="i"><use href="#dimic"/></svg>
        </div>
    </div>

    <div class="tbrow row2">
        <div class="panel p-ws">
            <div class="combo ws-combo"><span>AutoCAD 经典</span></div>
            <svg class="i"><use href="#gear"/></svg>
            <svg class="i"><use href="#wsgrid"/></svg>
        </div>
        <div class="panel p-layer">
            <svg class="i"><use href="#layers"/></svg>
            <div class="combo layer-combo">
                <svg class="i"><use href="#bulb"/></svg>
                <svg class="i"><use href="#sun"/></svg>
                <svg class="i"><use href="#frz"/></svg>
                <svg class="i"><use href="#lock"/></svg>
                <span class="swatch"></span>
                <span>0</span>
            </div>
            <svg class="i"><use href="#layers2"/></svg>
            <svg class="i"><use href="#layers3"/></svg>
            <svg class="i"><use href="#layers"/></svg>
        </div>
        <div class="panel p-prop">
            <div class="combo prop-combo"><span class="swatch"></span><span>ByLayer</span></div>
            <span class="sep"></span>
            <div class="combo lt-combo"><span class="ltline"></span></div>
        </div>
    </div>

    <div class="main">
        <div class="lefttools">
            <div class="toolcol">
                <svg class="i"><use href="#t-line"/></svg>
                <svg class="i"><use href="#t-cline"/></svg>
                <svg class="i"><use href="#t-pline"/></svg>
                <svg class="i"><use href="#t-poly"/></svg>
                <svg class="i"><use href="#t-rect"/></svg>
                <svg class="i"><use href="#t-arc"/></svg>
                <svg class="i"><use href="#t-circle"/></svg>
                <svg class="i"><use href="#t-cloud"/></svg>
                <svg class="i"><use href="#t-spline"/></svg>
                <svg class="i"><use href="#t-ell"/></svg>
                <svg class="i"><use href="#t-earc"/></svg>
                <svg class="i"><use href="#t-ins"/></svg>
                <svg class="i"><use href="#t-blk"/></svg>
                <svg class="i"><use href="#t-pt"/></svg>
                <svg class="i"><use href="#t-hatch"/></svg>
                <svg class="i"><use href="#t-grad"/></svg>
                <svg class="i"><use href="#t-reg"/></svg>
                <svg class="i"><use href="#t-table"/></svg>
                <span class="tool-a">A</span>
                <svg class="i"><use href="#t-add"/></svg>
            </div>
        </div>
        <div class="canvas">
            <span class="axis-y"></span>
            <span class="axis-x"></span>
            <span class="viewlabel">[−][俯视][二维线框]</span>
        </div>
        <div class="rightpanel">
            <div class="rp-a"><span class="rp-thumb"></span></div>
            <div class="rp-b">上一个</div>
            <div class="rp-tools">
                <span class="rp-dash"></span>
                <svg class="i"><use href="#r-a"/></svg>
                <svg class="i"><use href="#r-b"/></svg>
                <svg class="i"><use href="#r-c"/></svg>
                <span class="rp-dash"></span>
                <svg class="i"><use href="#r-d"/></svg>
            </div>
        </div>
    </div>

    <div class="cmd">
        <div class="cmd-grip">
            <span class="grip"></span>
            <svg width="12" height="12"><path d="M1.500 1.500l9 9M10.500 1.500l-9 9" stroke="#ddd" stroke-width="2.200"/></svg>
            <svg width="16" height="16"><path d="M1 5l3-3 1 3 2 1-3 1zM6 6l8 8" fill="#ddd" stroke="#ddd" stroke-width="2.400"/></svg>
        </div>
        <div class="cmd-body">
            <div class="cmd-hist">命令: 正在重生成模型。</div>
            <div class="cmd-input">
                <span class="prompt">&gt;_</span>
                <span class="drop gray"></span>
                <span class="cmd-ph">键入命令</span>
            </div>
        </div>
    </div>

    <div class="layouts">
        <div class="ltab on">模型</div>
        <div class="ltab">布局1</div>
        <div class="ltab">布局2</div>
        <div class="ltab plus">+</div>
        <div class="readout">
            <span class="ro-a">DIMSCALE:&lt;1:1&gt; DIMSTY:&lt;ISO-25&gt; STYLE:&lt;Standard&gt;</span>
            <span class="ro-b">4813.9006, -1005.5631, 0.0000</span>
        </div>
    </div>

    <div class="statusbar">
        <div class="sg"><span class="sc model">模型</span></div>
        <div class="sg tight">
            <span class="sc c62">
                <svg class="i"><use href="#s-grid"/></svg>
                <svg class="i"><use href="#s-dots"/></svg>
                <span class="drop white"></span>
            </span>
        </div>
        <div class="sg">
            <span class="sc c25"><svg class="i"><use href="#s-note"/></svg></span>
            <span class="sc c25"><svg class="i"><use href="#s-inf"/></svg></span>
            <span class="sc c102">
                <svg class="i"><use href="#s-ortho"/></svg>
                <svg class="i"><use href="#s-polar"/></svg>
                <span class="drop white"></span>
                <svg class="i"><use href="#s-iso"/></svg>
                <span class="drop white"></span>
            </span>
            <span class="sc c64">
                <svg class="i"><use href="#s-ang"/></svg>
                <svg class="i"><use href="#s-osnap"/></svg>
                <span class="drop white"></span>
            </span>
            <span class="sc c25"><svg class="i"><use href="#s-lw"/></svg></span>
            <span class="sc c25"><svg class="i"><use href="#s-tr"/></svg></span>
            <span class="sc c25"><svg class="i"><use href="#s-sel"/></svg></span>
            <span class="sc c39"><svg class="i"><use href="#s-3do"/></svg><span class="drop white"></span></span>
        </div>
        <div class="sg">
            <span class="sc c101">
                <svg class="i"><use href="#s-ucs"/></svg>
                <svg class="i"><use href="#s-3d"/></svg>
                <span class="drop white"></span>
                <svg class="i"><use href="#s-gizmo"/></svg>
                <span class="drop white"></span>
            </span>
        </div>
        <div class="sg">
            <span class="sc c145">
                <svg class="i"><use href="#s-man"/></svg>
                <svg class="i"><use href="#s-man2"/></svg>
                <svg class="i"><use href="#s-man3"/></svg>
                <span class="scale">1:1 / 100%</span>
                <span class="drop white"></span>
            </span>
        </div>
        <div class="sg tight">
            <span class="sc c39"><svg class="i"><use href="#s-gear"/></svg><span class="drop white"></span></span>
            <span class="sc c24"><svg class="i"><use href="#s-plus"/></svg></span>
        </div>
        <div class="sg">
            <span class="sc c97">
                <svg class="i"><use href="#s-ruler"/></svg>
                <span class="units">小数</span>
                <span class="drop white"></span>
            </span>
            <span class="sc c24"><svg class="i"><use href="#s-calc"/></svg></span>
        </div>
        <div class="sg">
            <span class="sc c39">
                <svg class="i big"><use href="#s-wl"/></svg>
                <span class="drop white"></span>
            </span>
            <span class="sc c24"><svg class="i"><use href="#s-shape"/></svg></span>
        </div>
        <div class="sg"><span class="sc c23"><svg class="i big"><use href="#s-perf"/></svg></span></div>
        <div class="sg"><span class="sc c30"><svg class="i warn"><use href="#s-warn"/></svg></span></div>
        <div class="sg tight">
            <span class="sc c48">
                <svg class="i big"><use href="#s-full"/></svg>
                <svg class="i"><use href="#s-menu"/></svg>
            </span>
        </div>
    </div>

    <div class="popup mainmenu">
        <div class="mi">系统设定</div>
        <div class="msep"></div>
        <div class="mi hot">平面墙柱</div>
        <div class="mi">平面门窗</div>
        <div class="msep"></div>
        <div class="mi">建筑构件</div>
        <div class="mi">装饰构件</div>
        <div class="mi">建筑符号</div>
        <div class="mi">索引标题</div>
        <div class="mi">统计工具</div>
        <div class="msep"></div>
        <div class="mi">文字内容</div>
        <div class="mi">文字其他</div>
        <div class="mi">标注绘制</div>
        <div class="mi">标注修改</div>
        <div class="msep"></div>
        <div class="mi">曲线工具</div>
        <div class="mi">特殊工具</div>
        <div class="mi">修改增强</div>
        <div class="mi">检查修正</div>
        <div class="msep"></div>
        <div class="mi">图块属性</div>
        <div class="mi">填充线型</div>
        <div class="mi">图层工具</div>
        <div class="mi">视口布局</div>
        <div class="msep"></div>
        <div class="mi">特性刷子</div>
        <div class="mi">其他工具</div>
        <div class="mi et">E T 工具</div>
    </div>

    <div class="popup submenu">
        <div class="si"><svg class="i"><use href="#m-ax"/></svg><span class="sl">画轴线</span><span class="ks k20">*&lt;ax&gt;</span></div>
        <div class="si hot"><svg class="i"><use href="#m-grid"/></svg><span class="sl">简单轴线网</span><span class="ks k20">**&lt;zxw&gt;</span></div>
        <div class="ssep"></div>
        <div class="si"><svg class="i"><use href="#m-wall"/></svg><span class="sl">画墙</span><span class="ks">*****&lt;ww&gt;</span></div>
        <div class="si"><svg class="i"><use href="#m-cut"/></svg><span class="sl">智能墙剪</span><span class="ks k8">*****&lt;TW&gt;</span></div>
        <div class="si"><svg class="i"><use href="#m-thick"/></svg><span class="sl">修正墙体厚度</span><span class="ks k16">****&lt;wwT&gt;</span></div>
        <div class="si"><svg class="i"><use href="#m-xww"/></svg><span class="sl">轴线变墙</span><span class="ks k12">***&lt;Xww&gt;</span></div>
        <div class="si"><svg class="i"><use href="#m-off"/></svg><span class="sl">墙净距偏移</span><span class="ks k20">**&lt;wwO&gt;</span></div>
        <div class="ssep"></div>
        <div class="si"><svg class="i"><use href="#m-mid"/></svg><span class="sl">求墙中轴线</span><span class="ks k20">**&lt;wwA&gt;</span></div>
        <div class="si"><svg class="i"><use href="#m-fillw"/></svg><span class="sl">填充墙、柱</span><span class="ks k20">**&lt;wwF&gt;</span></div>
        <div class="ssep"></div>
        <div class="si"><svg class="i"><use href="#m-sq"/></svg><span class="sl">画方柱子</span><span class="ks k8">****&lt;zzR&gt;</span></div>
        <div class="si"><svg class="i"><use href="#m-circ"/></svg><span class="sl">画圆柱子</span><span class="ks k8">****&lt;zzC&gt;</span></div>
        <div class="si"><svg class="i"><use href="#m-l"/></svg><span class="sl">画L型柱子</span><span class="ks k14">***&lt;zzL&gt;</span></div>
        <div class="si"><svg class="i"><use href="#m-t"/></svg><span class="sl">画T型柱子</span><span class="ks k15">***&lt;zzT&gt;</span></div>
        <div class="si"><svg class="i"><use href="#m-x"/></svg><span class="sl">画十字型柱子</span><span class="ks k20">***&lt;zzX&gt;</span></div>
        <div class="ssep"></div>
        <div class="si"><svg class="i"><use href="#m-bz"/></svg><span class="sl">轴线布置柱子</span><span class="ks k20">**&lt;zzBZ&gt;</span></div>
        <div class="si"><svg class="i"><use href="#m-cv"/></svg><span class="sl">变成柱子</span><span class="ks k12">**&lt;xxzz&gt;</span></div>
        <div class="si"><svg class="i"><use href="#m-fillc"/></svg><span class="sl">填充柱子</span><span class="ks k16">**&lt;zzF&gt;</span></div>
        <div class="ssep"></div>
        <div class="si"><svg class="i"><use href="#m-del"/></svg><span class="sl">删除墙柱门窗</span><span class="ks k20">****&lt;EW&gt;</span></div>
    </div>
</div>

<div class="desktop">
    <div class="dline one">推荐驱动)</div>
    <div class="dline two">进行微创新</div>
</div>
</body>
</html>
```

FILE: styles.css
```css
* {
    box-sizing: border-box;
}

html, body {
    margin: 0;
    height: 739px;
    overflow: hidden;
}

body {
    display: flex;
    align-items: flex-start;
    padding-left: 7px;
    font-family: "Noto Sans", "Noto Sans CJK SC", sans-serif;
    font-size: 12px;
    background: linear-gradient(115deg, #0b3a30 0%, #0d3c31 60%, #14483a 100%);
}

.defs {
    position: absolute;
}

.i {
    width: 16px;
    height: 16px;
    flex: none;
}

.i.big {
    width: 18px;
    height: 18px;
}

.i.warn {
    width: 20px;
    height: 18px;
}

/* window */
.window {
    position: relative;
    z-index: 1;
    width: 1057px;
    height: 738px;
    flex: none;
    background: #444;
    border-left: 1px solid #fff;
    border-right: 1px solid #fff;
    border-bottom: 1px solid #fff;
    display: flex;
    flex-direction: column;
}

.titlebar {
    height: 33px;
    background: #fff;
    display: flex;
    flex: none;
    padding-top: 8px;
    border-bottom: 1px solid #444;
}

.qat {
    width: 218px;
    height: 24px;
    margin-left: 40px;
    background: linear-gradient(#9a9a9a, #5f5f5f);
    border: 1px solid #777;
    display: flex;
    align-items: center;
    gap: 8px;
    padding-left: 9px;
}

.qat .drop {
    margin: 0 1px 0 0;
    border-top-color: #c4c4c4;
}

.more {
    display: flex;
}

.more i {
    width: 0;
    height: 0;
    border: 3px solid transparent;
    border-left: 4px solid #111;
    border-right: 0;
}

.docname {
    width: 187px;
    padding: 1px 0 0 60px;
    font-size: 12.300px;
    color: #222;
}

.infobar {
    width: 446px;
    height: 24px;
    background: linear-gradient(#a2a2a2, #626262);
    border: 1px solid #777;
    display: flex;
    align-items: center;
    padding-left: 4px;
}

.tri-right {
    width: 0;
    height: 0;
    border: 4px solid transparent;
    border-left: 5px solid #ddd;
    border-right: 0;
    margin-right: 4px;
}

.search {
    width: 180px;
    height: 22px;
    background: #6a6a6a;
    border: 1px solid #3a3a3a;
    color: #b4b4b4;
    font-style: italic;
    font-size: 11.300px;
    line-height: 19px;
    padding-left: 2px;
    margin-right: 4px;
}

.infobar .user {
    margin-left: 8px;
}

.login {
    color: #eee;
    margin-left: 4px;
    width: 63px;
}

.infobar .drop {
    margin-right: 10px;
}

.infobar .xch {
    margin-right: 8px;
}

.infobar .i + .drop {
    margin-left: 6px;
}

.info-sep {
    width: 1px;
    height: 16px;
    background: #8a8a8a;
    margin-right: 9px;
}

.winctrl {
    display: flex;
    margin: -8px 0 0 28px;
}

.wbtn {
    width: 45px;
    height: 30px;
    display: flex;
    align-items: center;
    justify-content: center;
}

.logo {
    position: absolute;
    left: 0;
    top: 8px;
    width: 41px;
    height: 41px;
    background: linear-gradient(#c4c4c4, #6a6a6a);
    border: 1px solid #111;
    display: flex;
    align-items: center;
    padding-left: 4px;
}

.logo svg {
    margin-top: 2px;
}

.logo .drop {
    margin: 2px 0 0 2px;
}

.drop {
    width: 0;
    height: 0;
    flex: none;
    border-left: 3.500px solid transparent;
    border-right: 3.500px solid transparent;
    border-top: 4px solid #777;
}

.drop.gray {
    border-left-width: 3px;
    border-right-width: 3px;
    border-top: 3px solid #777;
}

.drop.light {
    border-left-width: 3px;
    border-right-width: 3px;
    border-top: 3px solid #e6e6e6;
}

.drop.dark {
    border-top-color: #222;
}

.drop.white {
    border-top-color: #eee;
    border-left-width: 4px;
    border-right-width: 4px;
}

/* menu bar */
.menubar {
    height: 20px;
    flex: none;
    background: linear-gradient(#8c8c8c, #474747);
    display: flex;
    align-items: center;
    padding-left: 43px;
    color: #ececec;
}

.mb {
    padding: 0 12.550px;
    white-space: nowrap;
}

.mb.active {
    padding: 0 7px;
    height: 18px;
    line-height: 16px;
    background: #4a4a4a;
    border: 1px solid #222;
}

.mdi {
    margin-left: auto;
    margin-right: 2px;
    display: flex;
    align-items: center;
    gap: 5px;
}

/* file tabs */
.tabbar {
    height: 29px;
    flex: none;
    background: linear-gradient(#3a3a3a 86%, #4a4a4a 86%);
    display: flex;
    align-items: flex-end;
    padding: 0 0 4px 19px;
}

.doctab {
    width: 128px;
    height: 21px;
    background: linear-gradient(#6a6a6a, #4c4c4c);
    border-radius: 12px 12px 0 0;
    clip-path: polygon(0 100%, 6px 0, calc(100% - 6px) 0, 100% 100%);
    color: #cfcfcf;
    display: flex;
    align-items: center;
    padding-left: 13px;
    font-size: 12px;
}

.tabx {
    margin-left: auto;
    margin-right: 14px;
    font-size: 16px;
    color: #777;
}

.addtab {
    width: 22px;
    height: 14px;
    margin: 0 0 3px 5px;
    background: #555;
    border-radius: 6px 6px 0 0;
    color: #ccc;
    font-size: 14px;
    line-height: 13px;
    text-align: center;
    font-weight: 700;
}

/* toolbars */
.tbrow {
    height: 24px;
    flex: none;
    display: flex;
    gap: 2px;
    padding-left: 9px;
}

.row1 {
    gap: 3px;
}

.row2 {
    margin-top: 3px;
}

.panel {
    height: 24px;
    background: #4c4c4c;
    border: 1px solid #2f2f2f;
    border-top-color: #555;
    display: flex;
    align-items: center;
    gap: 7px;
    padding-left: 2px;
}

.sep {
    width: 1px;
    height: 18px;
    flex: none;
    margin: 0 -1px;
    background: #7a7a7a;
    box-shadow: 1px 0 0 #333;
}

.p-std {
    width: 636px;
}

.p-std .drop {
    margin: 0 -0.500px;
    border-top-color: #8a8a8a;
}

.p-style {
    flex: 1;
    padding-left: 10px;
    gap: 5px;
    border-right: 0;
}

.combo {
    height: 21px;
    background: #dedede;
    color: #111;
    position: relative;
    display: flex;
    align-items: center;
    flex: none;
}

.combo::after {
    content: "";
    position: absolute;
    right: 5px;
    top: 6px;
    width: 5px;
    height: 5px;
    border-right: 1px solid #555;
    border-bottom: 1px solid #555;
    transform: rotate(45deg);
}

.style-combo {
    width: 119px;
    padding: 0 0 1px 17px;
    font-size: 12.500px;
}

.p-ws {
    width: 220px;
    padding-left: 0;
    gap: 5px;
}

.ws-combo {
    width: 175px;
    margin-left: -1px;
    padding: 0 0 2px 9px;
    font-size: 12.500px;
}

.p-ws .i:last-child {
    margin-left: 0;
}

.p-layer {
    width: 400px;
    padding-left: 12px;
    gap: 7px;
}

.layer-combo {
    width: 300px;
    padding-left: 5px;
    gap: 2.500px;
    margin-left: -3px;
    margin-right: -3px;
}

.layer-combo .i {
    width: 14px;
}

.layer-combo span:last-child {
    margin-left: 4px;
    font-size: 12.500px;
}

.swatch {
    width: 10px;
    height: 10px;
    flex: none;
    background: #fff;
    border: 1px solid #111;
}

.p-prop {
    flex: 1;
    gap: 5px;
    padding-left: 8px;
    border-right: 0;
}

.prop-combo {
    width: 150px;
    padding-left: 6px;
    gap: 4px;
    font-family: "Liberation Mono", monospace;
    font-size: 10px;
}

.lt-combo {
    flex: 1;
    padding-left: 5px;
}

.ltline {
    width: 30px;
    height: 1px;
    background: #111;
}

/* drawing area */
.main {
    height: 485px;
    margin-top: 4px;
    flex: none;
    display: flex;
}

.lefttools {
    width: 29px;
    flex: none;
    background: #555;
}

.toolcol {
    width: 25px;
    height: 449px;
    background: #5a5a5a;
    border-right: 1px solid #333;
    border-bottom: 1px solid #333;
    display: flex;
    flex-direction: column;
    align-items: center;
    gap: 6px;
    padding-top: 12px;
    padding-left: 2px;
}

.tool-a {
    height: 16px;
    font-family: "Liberation Sans", sans-serif;
    font-size: 19px;
    line-height: 16px;
    color: #f2f2f2;
}

.canvas {
    width: 894px;
    flex: none;
    position: relative;
    background-color: #151515;
    background-image:
        linear-gradient(#2a2a35 1px, transparent 1px),
        linear-gradient(90deg, #2a2a35 1px, transparent 1px),
        linear-gradient(#1f1f1f 1px, transparent 1px),
        linear-gradient(90deg, #1f1f1f 1px, transparent 1px);
    background-size: 133px 133px, 133px 133px, 26.600px 26.600px, 26.600px 26.600px;
    background-position: 0 49px, 64px 0, 0 22.400px, 11px 0;
    overflow: hidden;
}

.axis-y {
    position: absolute;
    left: 330px;
    top: 0;
    width: 1px;
    height: 315px;
    background: #2c4630;
}

.axis-x {
    position: absolute;
    left: 330px;
    right: 0;
    top: 315px;
    height: 1px;
    background: #6e1f1f;
}

.viewlabel {
    position: absolute;
    left: 3px;
    top: 5px;
    color: #e4e4e4;
    letter-spacing: 0.300px;
}

.rightpanel {
    flex: 1;
    display: flex;
    background: #555;
}

.rp-a {
    width: 24px;
    margin-left: 5px;
    border-left: 1px solid #333;
    border-right: 1px solid #333;
    display: flex;
    justify-content: center;
    align-items: flex-end;
}

.rp-thumb {
    width: 12px;
    height: 8px;
    margin-bottom: 9px;
    background: #ddd;
}

.rp-b {
    width: 75px;
    display: flex;
    align-items: flex-end;
    padding: 0 0 1px 6px;
    color: #111;
    line-height: 15px;
}

.rp-tools {
    width: 24px;
    border-left: 1px solid #333;
    display: flex;
    flex-direction: column;
    justify-content: flex-end;
    align-items: center;
    gap: 6px;
    padding-bottom: 3px;
}

.rp-dash {
    width: 9px;
    height: 1px;
    border-right: 2px solid #eee;
    border-left: 5px solid #eee;
}

/* command line */
.cmd {
    height: 58px;
    flex: none;
    display: flex;
    background: #555;
}

.cmd-grip {
    width: 23px;
    flex: none;
    display: flex;
    flex-direction: column;
    align-items: center;
    padding-top: 3px;
    gap: 8px;
}

.grip {
    width: 17px;
    height: 5px;
    background-image: radial-gradient(#aaa 1px, transparent 1px);
    background-size: 3px 3px;
}

.cmd-body {
    flex: 1;
    padding-top: 1px;
    display: flex;
    flex-direction: column;
}

.cmd-hist {
    height: 34px;
    background: #fff;
    color: #111;
    font-size: 13px;
    padding: 13px 0 0 2px;
    line-height: 18px;
}

.cmd-input {
    height: 23px;
    background: #fff;
    border-top: 1px solid #8a8a8a;
    display: flex;
    align-items: center;
    padding-left: 5px;
    gap: 4px;
}

.prompt {
    width: 14px;
    height: 14px;
    background: #d8d8d8;
    border: 1px solid #999;
    font-size: 8px;
    line-height: 12px;
    color: #333;
}

.cmd-ph {
    margin-left: 3px;
    color: #aaa;
    font-style: italic;
    font-size: 13px;
}

/* layout tabs */
.layouts {
    height: 28px;
    flex: none;
    background: #383838;
    border-top: 1px solid #666;
    display: flex;
    align-items: flex-start;
    padding-left: 12px;
    position: relative;
}

.ltab {
    width: 54px;
    height: 18px;
    margin-right: -1px;
    background: #4a4a4a;
    color: #9a9a9a;
    font-size: 12.500px;
    line-height: 16px;
    text-align: center;
    clip-path: polygon(0 0, 100% 0, calc(100% - 5px) 100%, 5px 100%);
    border-radius: 0 0 6px 6px;
}

.ltab.on {
    width: 50px;
    background: #5f5f5f;
    color: #f2f2f2;
}

.ltab.plus {
    width: 22px;
    margin-left: 4px;
    color: #ddd;
    font-weight: 700;
    font-size: 15px;
}

.readout {
    margin-left: auto;
    margin-right: 1px;
    height: 25px;
    display: flex;
    margin-top: 1px;
    background: #555;
    border: 1px solid #777;
    color: #e6e6e6;
    line-height: 22px;
}

.ro-a {
    width: 310px;
    padding-left: 5px;
    border-right: 1px solid #777;
    white-space: nowrap;
    overflow: hidden;
}

.ro-b {
    width: 180px;
    padding-left: 8px;
    font-size: 11.700px;
    white-space: nowrap;
}

/* status bar */
.statusbar {
    height: 28px;
    flex: none;
    background: #3a3a3a;
    display: flex;
    gap: 2px;
    padding: 2px 0 0 2px;
    overflow: hidden;
}

.sg {
    height: 26px;
    display: flex;
    background: #555;
    border: 1px solid #777;
}

.sg.tight {
    margin-left: -1px;
}

.sc {
    display: flex;
    align-items: center;
    justify-content: space-around;
    height: 24px;
    border-right: 1px solid #777;
    color: #eee;
}

.sc:last-child {
    border-right: 0;
}

.model {
    width: 27px;
    justify-content: center;
    font-size: 13px;
}

.c23 { width: 23px; }
.c24 { width: 24px; }
.c25 { width: 25px; }
.c30 { width: 30px; }
.c39 { width: 39px; }
.c48 { width: 48px; }
.c62 { width: 62px; }
.c64 { width: 64px; }
.c97 { width: 97px; }
.c101 { width: 101px; }
.c102 { width: 102px; }
.c145 { width: 145px; }

.scale {
    font-size: 12.500px;
}

.units {
    font-size: 12px;
    margin: 0 6px 0 12px;
}

/* menus */
.popup {
    position: absolute;
    background: #f0f0f0;
    border: 1px solid #a0a0a0;
    box-shadow: 2px 2px 3px rgba(0, 0, 0, 0.35);
    color: #111;
    z-index: 5;
}

.mainmenu {
    left: 816px;
    top: 53px;
    width: 138px;
    height: 554px;
    padding: 2px;
}

.mi {
    height: 22px;
    line-height: 22px;
    padding-left: 32px;
    position: relative;
}

.mi:first-child {
    margin-top: 1px;
}

.mi:first-child + .msep {
    height: 6px;
}

.mi::after {
    content: "";
    position: absolute;
    right: 13px;
    top: 8px;
    width: 6px;
    height: 6px;
    border-top: 1px solid #555;
    border-right: 1px solid #555;
    transform: rotate(45deg);
}

.et {
    padding-left: 35px;
}

.msep {
    height: 7px;
    margin-left: 28px;
    margin-right: -2px;
    position: relative;
}

.msep::before {
    content: "";
    position: absolute;
    left: 0;
    right: 0;
    top: 3px;
    height: 1px;
    background: #d4d4d4;
}

.hot {
    background: #90c8f8;
}

.submenu {
    left: 949px;
    top: 82px;
    width: 230px;
    height: 437px;
    padding: 2px 2px 2px 1px;
}

.si {
    height: 22px;
    display: flex;
    align-items: center;
    padding-left: 3px;
}

.sl {
    width: 76px;
    margin-left: 13px;
    line-height: 22px;
    white-space: nowrap;
}

.ks {
    font-family: "Liberation Sans", sans-serif;
    font-size: 12px;
    letter-spacing: 0.500px;
    line-height: 22px;
    white-space: nowrap;
}

.k8 { padding-left: 8px; }
.k12 { padding-left: 12px; }
.k14 { padding-left: 14px; }
.k15 { padding-left: 15px; }
.k16 { padding-left: 16px; }
.k20 { padding-left: 20px; }

.ssep {
    height: 7px;
    margin-left: 29px;
    position: relative;
}

.ssep::before {
    content: "";
    position: absolute;
    left: 0;
    right: 0;
    top: 3px;
    height: 1px;
    background: #d4d4d4;
}

/* desktop behind the window */
.desktop {
    flex: 1;
    height: 739px;
    position: relative;
}

.dline {
    position: absolute;
    white-space: nowrap;
    color: #d2dedb;
    font-family: "Noto Sans CJK SC", sans-serif;
}

.dline.one {
    left: -4px;
    top: 625px;
    font-size: 21px;
    letter-spacing: 0.400px;
    line-height: 28px;
}

.dline.two {
    left: -3px;
    top: 706px;
    font-size: 19px;
    letter-spacing: 0.400px;
    line-height: 26px;
}
```
